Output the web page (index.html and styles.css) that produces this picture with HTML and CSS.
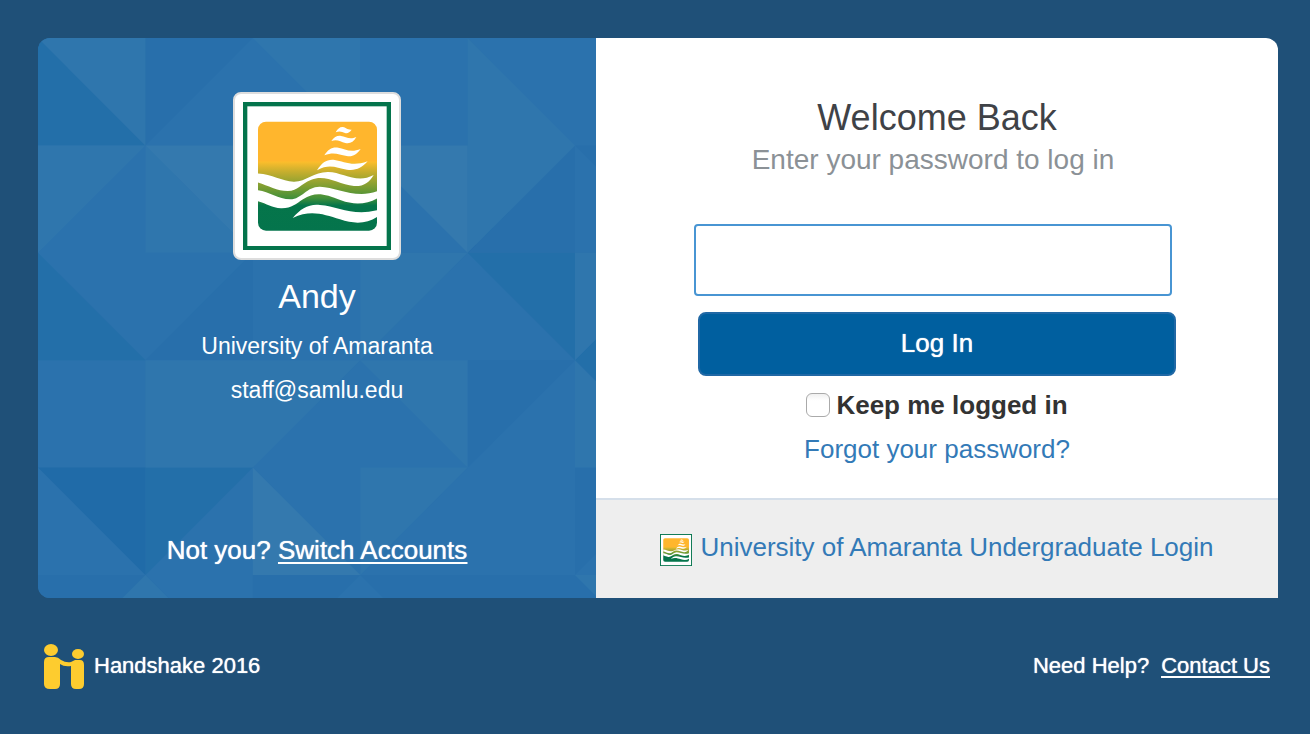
FILE: index.html
```html
<!DOCTYPE html>
<html lang="en">
<head>
<meta charset="utf-8">
<meta name="viewport" content="width=device-width, initial-scale=1">
<title>Handshake - Welcome Back</title>
<link rel="stylesheet" href="styles.css">
</head>
<body>
<main class="card">
  <section class="account">
    <svg class="pattern" viewBox="0 0 558 560" preserveAspectRatio="xMinYMin slice" aria-hidden="true">
      <g class="facets" transform="scale(107.4)">
        <path class="low" d="M0 0V1H1zM0 2V3H1zM4 2H5V3zM1 4H2L1 5zM5 3H6V4zM6 2V3H5z"/>
        <path class="deep" d="M0 4H1V5z"/>
        <path class="mid" d="M1 0H2L1 1zM5 1V2H4zM5 1H6V2zM2 2V3H1zM4 3H5L4 4zM5 4H6L5 5zM0 5H1L0 6zM2 5H3L2 6zM3 5H4V6zM4 5H5V6H4zM5 5V6H6z"/>
        <path class="high" d="M0 0H1V1zM2 0H3V1zM4 0V1H5zM0 1H1L0 2zM1 1V2H2zM2 1H3V2H2zM4 1H5L4 2zM3 2H4L3 3zM5 2H6L5 3zM1 3H3L2 4H1zM3 3H4V4zM5 3V4H6zM3 4H4L3 5zM1 5L0 6H2zM5 5H6V6z"/>
        <path class="top" d="M1 1H2V2zM3 1H4V2zM2 4V5H3z"/>
      </g>
    </svg>
    <div class="avatar">
      <svg class="avatar-logo" viewBox="60 54 444 444" role="img" aria-label="University of Amaranta logo">
        <defs>
          <linearGradient id="sky" x1="0" y1="113" x2="0" y2="440" gradientUnits="userSpaceOnUse">
            <stop offset="0" stop-color="#ffb62d"/>
            <stop offset=".36" stop-color="#ffb62d"/>
            <stop offset=".37" stop-color="#fbbd2c"/>
            <stop offset=".46" stop-color="#c6ae2e"/>
            <stop offset=".62" stop-color="#719b33"/>
            <stop offset=".7" stop-color="#43903a"/>
            <stop offset=".77" stop-color="#05754a"/>
            <stop offset="1" stop-color="#04744c"/>
          </linearGradient>
          <clipPath id="tile"><rect x="105" y="113" width="357" height="327" rx="24"/></clipPath>
        </defs>
        <g id="crest">
          <rect x="60" y="54" width="444" height="444" fill="#04744c"/>
          <rect x="73" y="67" width="418" height="419" fill="#fff"/>
          <rect x="105" y="113" width="357" height="327" rx="24" fill="url(#sky)"/>
          <g fill="#fff" clip-path="url(#tile)">
            <path d="M338 145C344 134 351 128 360 129C368 130 373 138 386 137C380 145 374 149 366 147C357 144 351 140 338 145z"/>
            <path d="M325 171C333 160 343 154 354 156C368 158 380 168 400 159C392 174 381 180 367 177C352 173 343 165 325 171z"/>
            <path d="M304 214C315 195 329 188 346 191C365 195 383 207 413 195C400 213 388 219 371 216C347 212 333 202 304 214z"/>
            <path d="M282 259C297 235 313 225 335 228C362 232 388 249 434 232C416 252 397 261 372 257C339 252 321 237 282 259z"/>
            <path d="M100 268C145 269 175 291 212 293C249 294 273 263 316 264C360 265 402 300 452 273C439 297 419 308 393 306C347 302 309 270 265 287C230 301 227 320 194 321C161 321 133 303 100 294z"/>
            <path d="M100 318C137 321 163 344 202 346C237 345 251 307 291 308C341 309 400 347 466 320V341C434 361 394 364 354 349C301 328 277 323 240 346C220 359 205 374 174 373C145 370 130 358 100 350z"/>
            <path d="M209 402C233 374 258 359 291 363C345 367 389 398 466 378V396C434 420 394 421 351 406C302 391 263 376 209 402z"/>
          </g>
        </g>
      </svg>
    </div>
    <h2 class="name">Andy</h2>
    <p class="detail">University of Amaranta</p>
    <p class="detail">staff@samlu.edu</p>
    <p class="switch">Not you? <a href="#switch">Switch Accounts</a></p>
  </section>

  <section class="login">
    <form class="form">
      <h1 class="title">Welcome Back</h1>
      <div class="entry">
        <label class="subtitle" for="password">Enter your password to log in</label>
        <input class="password" id="password" type="password">
      </div>
      <div class="actions">
        <button class="submit" type="submit">Log In</button>
        <div class="remember">
          <input class="check" id="keep" type="checkbox">
          <label for="keep">Keep me logged in</label>
        </div>
        <a class="link" href="#forgot">Forgot your password?</a>
      </div>
    </form>
    <div class="sso">
      <a class="link sso-link" href="#sso">
        <svg class="sso-logo" viewBox="60 54 444 444" aria-hidden="true"><use href="#crest"/></svg>
        <span>University of Amaranta Undergraduate Login</span>
      </a>
    </div>
  </section>
</main>

<footer class="footer">
  <div class="brand">
    <svg class="brand-mark" viewBox="0 0 42 48" aria-hidden="true">
      <ellipse cx="7" cy="6" rx="7" ry="6"/>
      <ellipse cx="34" cy="10" rx="6" ry="5"/>
      <path d="M5 13H11Q14 13 17 16Q22 19 27 18L31 16H36Q40 16 40 21V40Q40 45 35 45H32Q27 45 27 40V22Q20 23 16 20V40Q16 45 11 45H6Q0 45 0 40V18Q0 13 5 13z"/>
    </svg>
    <span>Handshake 2016</span>
  </div>
  <div class="help"><span>Need Help?</span><a href="#contact">Contact Us</a></div>
</footer>
</body>
</html>
```
FILE: styles.css
```css
* { box-sizing: border-box; }

body {
  margin: 0;
  padding: 38px 32px 40px 38px;
  background: #1f5078;
  color: #333;
  font: 26px/32px "Liberation Sans", Arial, sans-serif;
}

h1, h2, p { margin: 0; font-weight: 400; }

.card {
  display: grid;
  grid-template-columns: 9fr 11fr;
  min-height: 560px;
  border-radius: 12px 12px 0 12px;
  overflow: hidden;
}

.account {
  position: relative;
  display: flex;
  flex-direction: column;
  align-items: center;
  padding: 54px 24px 32px;
  background: #2b72ad;
  color: #fff;
  text-align: center;
}

.account > * { position: relative; }

.account > .pattern {
  position: absolute;
  inset: 0;
  width: 100%;
  height: 100%;
}

.facets .deep { fill: #206ba8; }
.facets .low { fill: #236fa9; }
.facets .mid { fill: #286fab; }
.facets .high { fill: #2f76ad; }
.facets .top { fill: #3479ae; }

.avatar {
  display: flex;
  padding: 8px;
  border: 2px solid #ddd;
  border-radius: 8px;
  background: #fff;
}

.avatar-logo { width: 148px; height: 148px; }

.name {
  margin: 16px 0 14px;
  font-size: 34px;
  line-height: 40px;
}

.detail {
  margin-bottom: 12px;
  font-size: 23px;
}

.switch {
  margin-top: auto;
  text-shadow: 0 0 1px #fff;
}

.switch a, .help a {
  color: inherit;
  text-decoration-thickness: 2px;
  text-underline-offset: 3px;
}

.login {
  display: flex;
  flex-direction: column;
  background: #fff;
  text-align: center;
}

.form { flex: 1; padding: 60px 0 32px; }

.title {
  color: #3f4247;
  font-size: 36px;
  line-height: 40px;
}

.entry { padding: 6px 106px 16px 98px; }

.subtitle {
  display: block;
  margin-bottom: 48px;
  color: #8b9196;
  font-size: 28px;
}

.password {
  display: block;
  width: 100%;
  height: 72px;
  padding: 0 16px;
  border: 2px solid #4895d3;
  border-radius: 4px;
  background: #fff;
  font: inherit;
  outline: none;
}

.actions {
  display: flex;
  flex-direction: column;
  align-items: center;
  gap: 12px;
  padding: 0 102px;
}

.submit {
  width: 100%;
  height: 64px;
  padding: 0 16px 2px;
  border: 2px solid #2068a5;
  border-radius: 8px;
  background: #005f9f;
  color: #fff;
  font: inherit;
  text-shadow: 0 0 1px #fff;
  cursor: pointer;
}

.remember {
  display: flex;
  align-items: center;
  gap: 6px;
  padding-top: 1px;
  font-weight: 700;
}

.check {
  appearance: none;
  width: 24px;
  height: 24px;
  margin: 0;
  border: 1px solid #aaa;
  border-radius: 6px;
  background: linear-gradient(#f0f0f0, #fff 30%);
}

.check:checked { background: #337ab7; }

.link { color: #337ab7; text-decoration: none; }

.sso {
  display: flex;
  justify-content: center;
  padding: 31px 16px 32px;
  border-top: 2px solid #d5dfea;
  background: #eee;
}

.sso-link {
  display: flex;
  align-items: flex-start;
  gap: 8px;
}

.sso-logo { width: 32px; height: 32px; margin-top: 3px; }

.footer {
  display: flex;
  justify-content: space-between;
  align-items: flex-start;
  padding: 46px 8px 0 6px;
  color: #fff;
  font-size: 22px;
  line-height: 44px;
  text-shadow: 0 0 1px #fff;
}

.brand { display: flex; gap: 8px; }
.brand-mark { width: 42px; height: 48px; fill: #fdcc2f; }
.help { display: flex; gap: 12px; }
```
